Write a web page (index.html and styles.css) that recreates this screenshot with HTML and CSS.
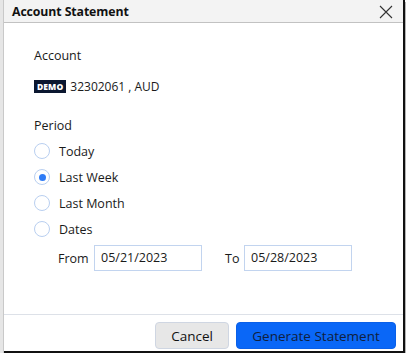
FILE: index.html
```html
<!DOCTYPE html>
<html>
<head>
<meta charset="utf-8">
<link rel="stylesheet" href="styles.css">
</head>
<body>
<div class="frame">
  <div class="edge"></div>
  <div class="dialog">
    <div class="titlebar">
      <span class="title">Account Statement</span>
      <svg class="close" width="14" height="14" viewBox="0 0 14 14"><path d="M1 1L13 13M13 1L1 13" stroke="#333" stroke-width="1.1" fill="none"/></svg>
    </div>
    <div class="content">
      <div class="label">Account</div>
      <div class="account"><span class="badge">DEMO</span><span class="acct">32302061 , AUD</span></div>
      <div class="label period">Period</div>
      <div class="radios">
        <label class="radio"><span class="dot"></span>Today</label>
        <label class="radio"><span class="dot on"></span>Last Week</label>
        <label class="radio"><span class="dot"></span>Last Month</label>
        <label class="radio"><span class="dot"></span>Dates</label>
      </div>
      <div class="dates">
        <span class="dl">From</span><div class="input">05/21/2023</div>
        <span class="dl to">To</span><div class="input">05/28/2023</div>
      </div>
    </div>
    <div class="footer">
      <button class="btn cancel">Cancel</button>
      <button class="btn primary">Generate Statement</button>
    </div>
  </div>
</div>
</body>
</html>
```
FILE: styles.css
```css
html, body { margin: 0; padding: 0; background: #fff; }
body { font-family: "Open Sans", "Noto Sans", sans-serif; color: #1a1a1a; }
.frame { display: flex; width: 405px; height: 353px; box-shadow: 1px 2px 0 #b5b5b5; }
.edge { width: 3px; background: #e6e6e6; border-right: 1px solid #c9c9c9; flex: none; }
.dialog { flex: 1; display: flex; flex-direction: column; background: #fff; border-right: 2px solid #111; border-bottom: 2px solid #111; }
.titlebar { height: 22px; background: #f3f3f3; border-bottom: 1px solid #c2c2c2; display: flex; align-items: center; justify-content: space-between; padding: 0 10px 0 8px; flex: none; }
.title { font-weight: 700; font-size: 12.3px; color: #111; letter-spacing: -0.1px; }
.close { display: block; margin-top: 1px; }
.content { flex: 1; padding: 23px 0 0 30px; font-size: 12.5px; }
.label { height: 20px; line-height: 20px; }
.account { display: flex; align-items: center; gap: 4px; margin-top: 13px; height: 14px; }
.acct { font-size: 12px; }
.badge { background: #0b1730; color: #fff; font-size: 8.5px; font-weight: 800; padding: 0 3px; height: 13px; line-height: 13px; letter-spacing: 0.1px; }
.period { margin-top: 23px; }
.radios { display: flex; flex-direction: column; margin-top: 2px; }
.radio { display: flex; align-items: center; height: 26px; gap: 9px; }
.dot { width: 14px; height: 14px; border: 1px solid #b9cff0; border-radius: 50%; box-sizing: content-box; display: flex; align-items: center; justify-content: center; }
.dot.on::after { content: ""; width: 7px; height: 7px; border-radius: 50%; background: #2f7cf6; }
.dates { display: flex; align-items: center; margin-top: 3px; padding-left: 24px; }
.dl { width: 36px; }
.dl.to { width: 19px; margin-left: 23px; }
.input { width: 100px; height: 24px; line-height: 24px; border: 1px solid #c2d4ef; padding-left: 6px; background: #fff; }
.footer { height: 37px; flex: none; border-top: 1px solid #dde1e8; display: flex; justify-content: flex-end; align-items: flex-start; gap: 7px; padding: 7px 7px 0 0; box-sizing: border-box; }
.btn { font-family: "Open Sans", "Noto Sans", sans-serif; font-size: 13.5px; height: 27px; border-radius: 4px; padding: 0; }
.cancel { width: 74px; background: #e7e7e7; border: 1px solid #cfd6e2; color: #111; }
.primary { width: 160px; background: #0a67f7; border: 1px solid #0a60e8; color: #10203c; }
```
